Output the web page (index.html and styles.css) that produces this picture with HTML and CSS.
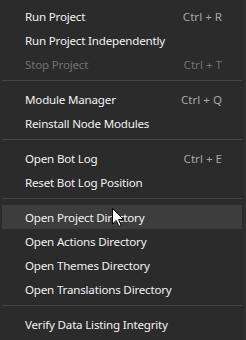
FILE: index.html
```html
<!DOCTYPE html>
<html>
<head>
<meta charset="utf-8">
<link rel="stylesheet" href="styles.css">
</head>
<body>
<div class="menu">
  <div class="item"><span class="label">Run Project</span><span class="key">Ctrl + R</span></div>
  <div class="item"><span class="label">Run Project Independently</span></div>
  <div class="item disabled"><span class="label">Stop Project</span><span class="key">Ctrl + T</span></div>
  <div class="sep"></div>
  <div class="item"><span class="label">Module Manager</span><span class="key">Ctrl + Q</span></div>
  <div class="item"><span class="label">Reinstall Node Modules</span></div>
  <div class="sep"></div>
  <div class="item"><span class="label">Open Bot Log</span><span class="key">Ctrl + E</span></div>
  <div class="item"><span class="label">Reset Bot Log Position</span></div>
  <div class="sep"></div>
  <div class="item hover"><span class="label">Open Project Directory</span></div>
  <div class="item"><span class="label">Open Actions Directory</span></div>
  <div class="item"><span class="label">Open Themes Directory</span></div>
  <div class="item"><span class="label">Open Translations Directory</span></div>
  <div class="sep"></div>
  <div class="item"><span class="label">Verify Data Listing Integrity</span></div>
  <svg class="cursor" width="13" height="20" viewBox="0 0 13 20">
    <path d="M0.5 0.5 L0.5 16 L4.2 12.4 L6.8 18.5 L9.2 17.5 L6.6 11.6 L11.6 11.6 Z" fill="#ffffff" stroke="#000000" stroke-width="1" stroke-linejoin="round"/>
  </svg>
</div>
</body>
</html>
```

FILE: styles.css
```css
html, body {
  margin: 0;
  padding: 0;
  background: #2b2b2b;
}
.menu {
  position: relative;
  width: 246px;
  height: 340px;
  box-sizing: border-box;
  padding: 4px 2px 4px 2px;
  background: #2b2b2b;
  border-right: 2px solid #303030;
  font-family: "Noto Sans", "Open Sans", sans-serif;
  font-size: 11.6px;
  letter-spacing: -0.2px;
  color: #f2f2f2;
  display: flex;
  flex-direction: column;
}
.item {
  height: 24px;
  display: flex;
  align-items: center;
  justify-content: space-between;
  padding: 0 20px 0 23px;
}
.item.hover {
  background: #3d3d3d;
}
.item.disabled {
  color: #727272;
}
.key {
  color: #a8a8a8;
  letter-spacing: 0;
}
.item.disabled .key {
  color: #727272;
}
.sep {
  height: 1px;
  margin: 4px 0 6px 0;
  background: #454545;
}
.cursor {
  position: absolute;
  left: 112px;
  top: 208px;
}
```
